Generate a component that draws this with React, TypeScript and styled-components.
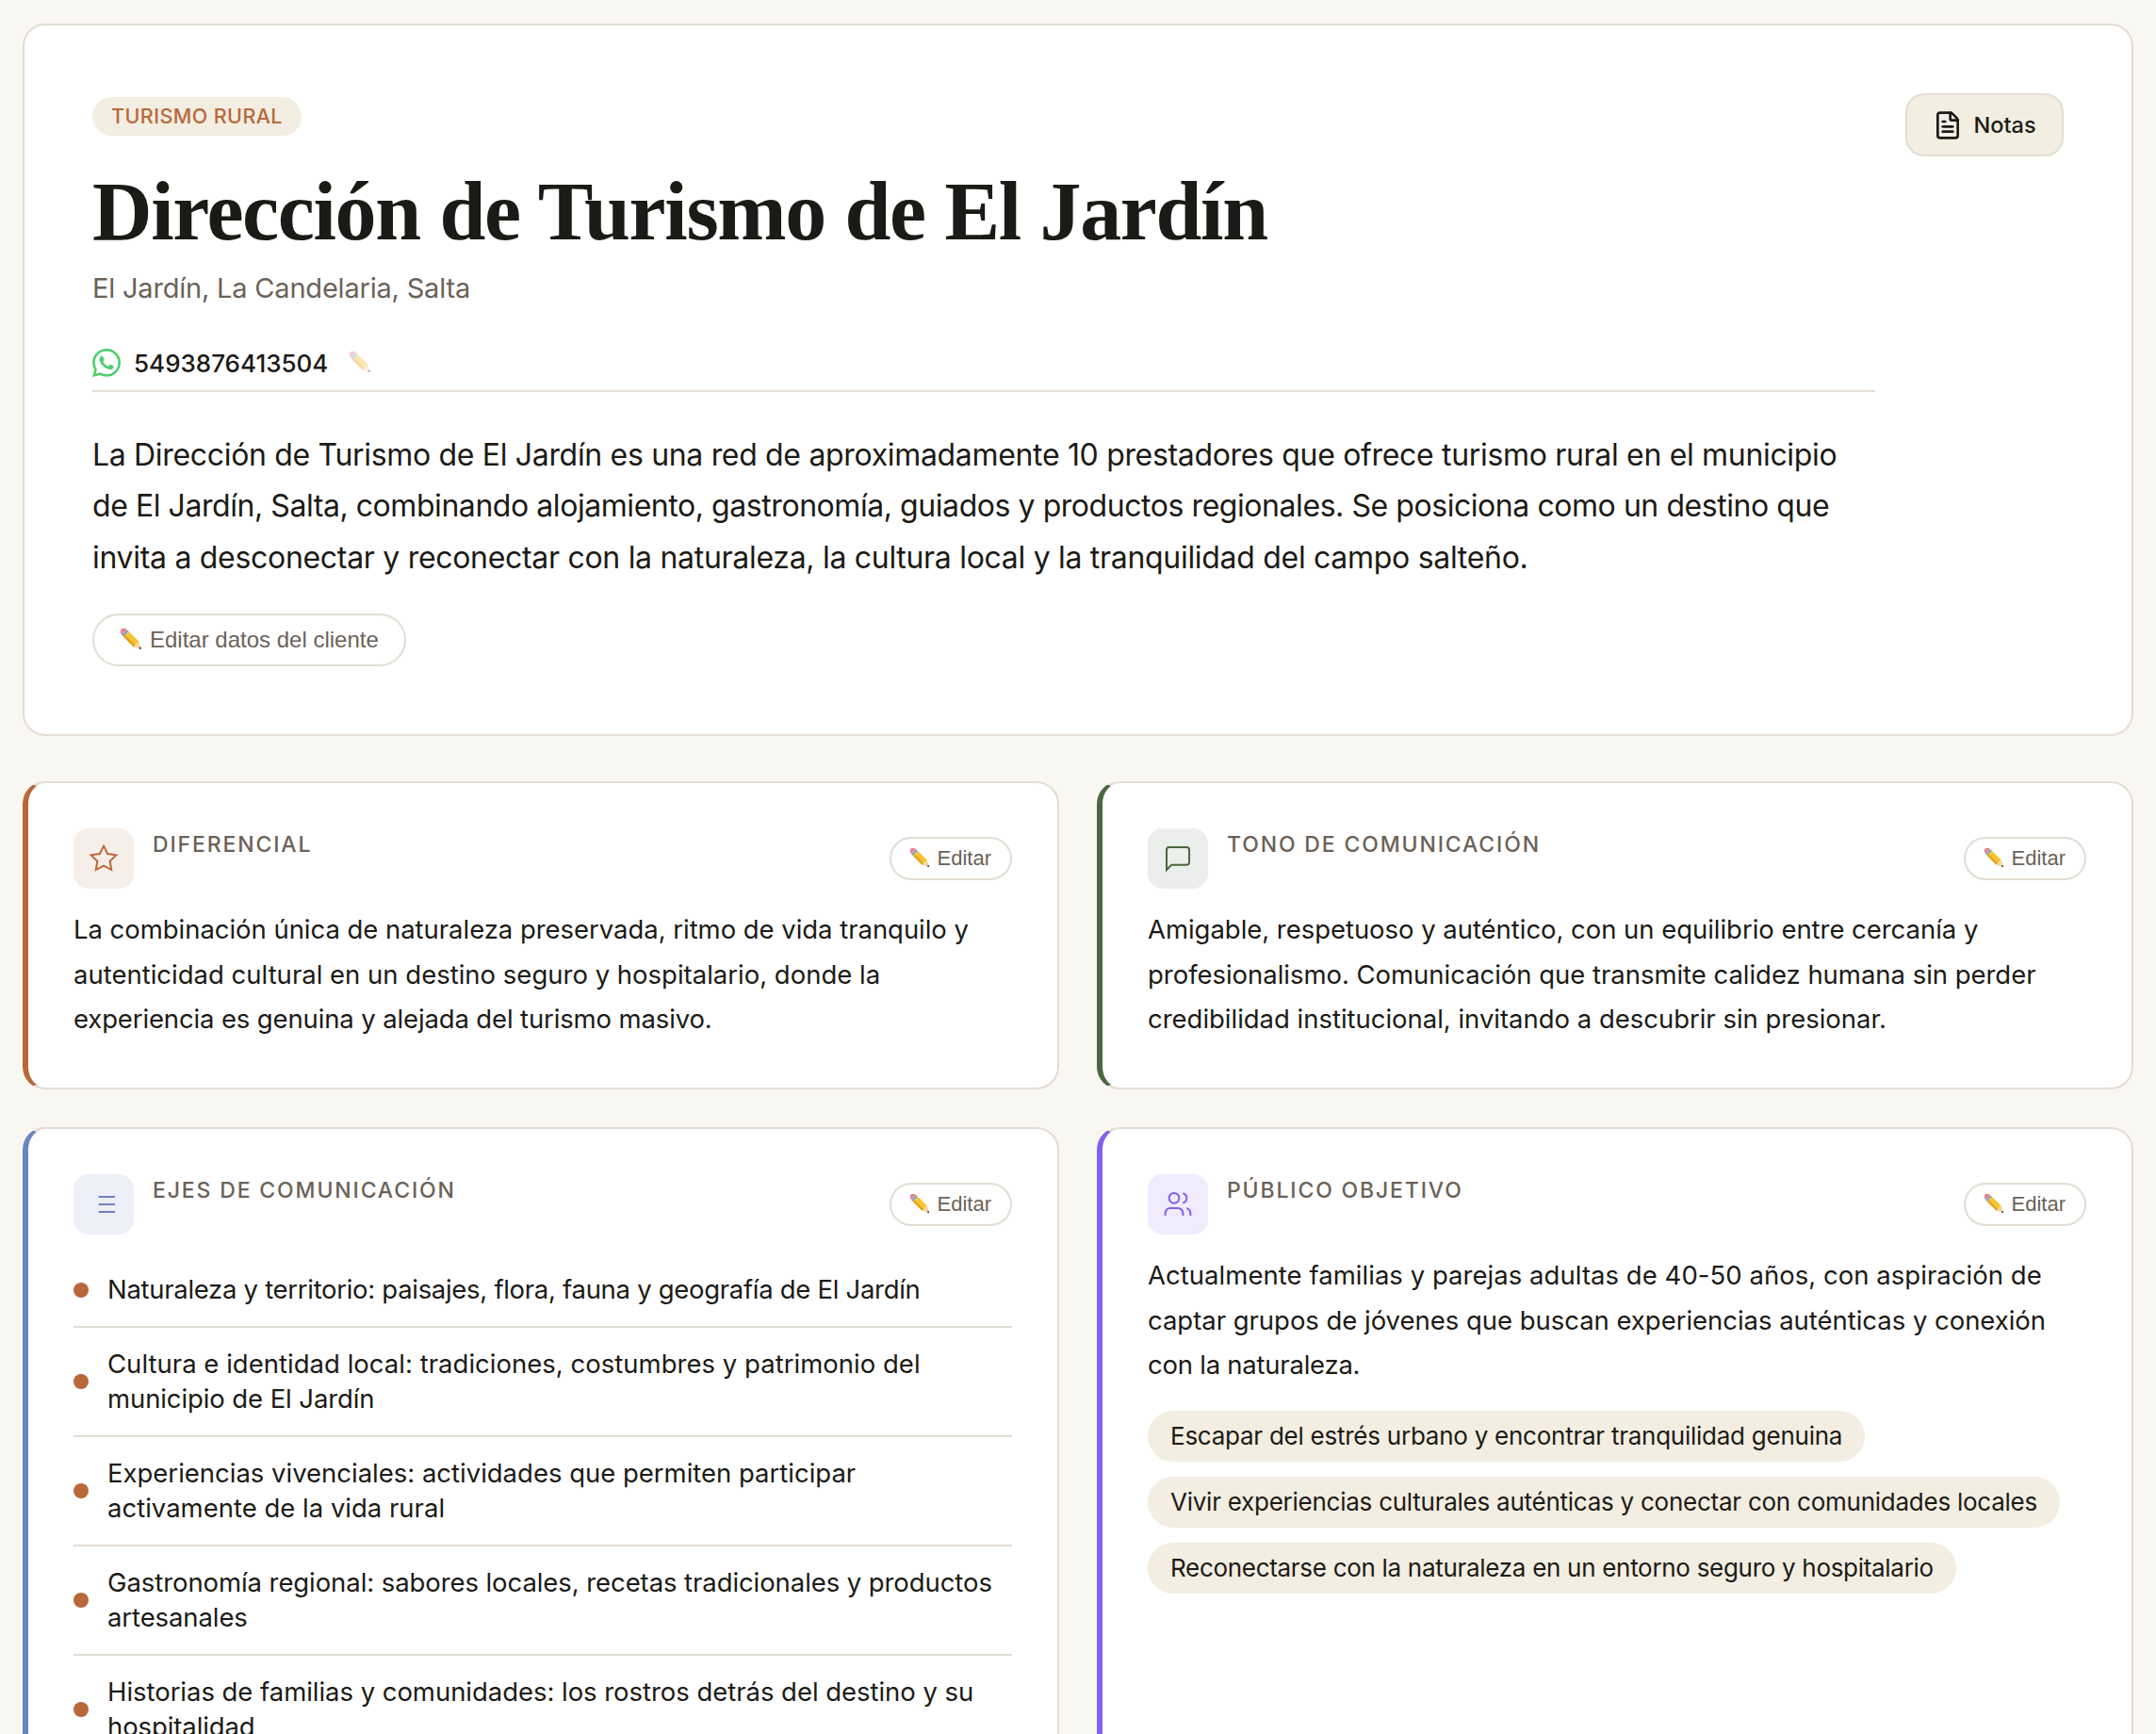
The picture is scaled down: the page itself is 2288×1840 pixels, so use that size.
import React from "react";
import styled, { createGlobalStyle } from "styled-components";
import { FileText } from "lucide-react";
import { SiWhatsapp } from "react-icons/si";

const SANS = `"Inter", "Noto Sans", sans-serif`;

const Global = createGlobalStyle`
  * { box-sizing: border-box; }
  html, body { margin: 0; height: 1840px; overflow: hidden; background: #f9f7f2; }
  body { font-family: ${SANS}; color: #1c1a16; }
`;

const Page = styled.main`
  display: flex;
  flex-direction: column;
  gap: 48px;
  padding: 25px 24px 0;
`;

const Hero = styled.section`
  display: flex;
  gap: 32px;
  align-items: flex-start;
  background: #fff;
  border: 2px solid #e3ddd3;
  border-radius: 24px;
  padding: 72px;
`;

const HeroMain = styled.div`
  flex: 1;
  min-width: 0;
`;

const Badge = styled.span`
  display: block;
  width: 222px;
  height: 41px;
  margin-top: 4px;
  border-radius: 21px;
  background: #f3ede2;
  color: #b8673b;
  font-size: 21.5px;
  font-weight: 500;
  line-height: 41px;
  text-align: center;
  letter-spacing: 0.4px;
`;

const Title = styled.h1`
  margin: 27px 0 0;
  font-family: "Liberation Serif", serif;
  font-size: 88px;
  font-weight: 700;
  line-height: 108px;
  letter-spacing: -1.36px;
  color: #1c1a16;
`;

const Location = styled.p`
  margin: 7px 0 0;
  font-size: 29px;
  line-height: 40px;
  letter-spacing: -0.2px;
  color: #6b6258;
`;

const ContactRow = styled.div`
  display: flex;
  align-items: center;
  height: 50px;
  margin-top: 34px;
  padding-bottom: 4px;
  border-bottom: 2px solid #e3ddd3;
  box-sizing: content-box;
  color: #1c1a16;
  font-size: 26px;
  font-weight: 500;
`;

const Phone = styled.span`
  margin-left: 14px;
  margin-right: 23px;
`;

const Description = styled.p`
  margin: 40px 0 0;
  font-size: 32px;
  line-height: 54.4px;
  color: #1c1a16;
`;

const Line = styled.span<{ $track: number }>`
  display: block;
  white-space: nowrap;
  letter-spacing: ${(p) => p.$track}px;
`;

const EditPill = styled.button<{ $small?: boolean }>`
  display: inline-flex;
  align-items: center;
  gap: 7px;
  border: 2px solid #e3ddd3;
  border-radius: 999px;
  background: #fff;
  color: #6b6258;
  font-family: "Liberation Sans", Arial, sans-serif;
  font-size: ${(p) => (p.$small ? 22 : 24)}px;
  line-height: ${(p) => (p.$small ? 26 : 28)}px;
  padding: ${(p) => (p.$small ? "8px 20px" : "12px 27px 12px 28px")};
  flex: none;
`;

const HeroEdit = styled(EditPill)`
  margin-top: 32px;
`;

const NotesButton = styled.button`
  flex: none;
  display: flex;
  align-items: center;
  justify-content: center;
  gap: 11px;
  width: 168px;
  height: 67px;
  padding: 0;
  background: #f3ede2;
  border: 2px solid #e3ddd3;
  border-radius: 20px;
  color: #1c1a16;
  font-family: ${SANS};
  font-size: 23.5px;
  font-weight: 500;
  svg { flex: none; }
`;

const Grid = styled.div`
  display: grid;
  grid-template-columns: 1fr 1fr;
  gap: 40px;
  align-items: stretch;
`;

const Card = styled.article<{ $accent: string }>`
  background: #fff;
  border: 2px solid #e3ddd3;
  border-left: 6px solid ${(p) => p.$accent};
  border-radius: 24px;
  padding: 48px;
`;

const CardHeader = styled.header`
  display: flex;
  align-items: center;
  gap: 20px;
  margin-bottom: 20px;
`;

const IconBox = styled.div<{ $bg: string; $fg: string }>`
  display: flex;
  align-items: center;
  justify-content: center;
  flex: none;
  width: 64px;
  height: 64px;
  border-radius: 16px;
  background: ${(p) => p.$bg};
  color: ${(p) => p.$fg};
`;

const Label = styled.h2`
  flex: 1;
  align-self: flex-start;
  margin: 0;
  font-size: 23px;
  font-weight: 500;
  line-height: 34px;
  letter-spacing: 1.85px;
  color: #6b6258;
`;

const Body = styled.p`
  margin: 0;
  font-size: 27.5px;
  line-height: 47.6px;
  color: #1c1a16;
`;

const List = styled.ul`
  list-style: none;
  margin: 0;
  padding: 0;
`;

const Item = styled.li`
  display: flex;
  align-items: center;
  gap: 20px;
  padding: 20px 0;
  border-bottom: 2px solid #e3ddd3;
  font-size: 27.5px;
  line-height: 37px;
  &:last-child { border-bottom: 0; }
`;

const Dot = styled.span`
  flex: none;
  width: 16px;
  height: 16px;
  border-radius: 50%;
  background: #b8673b;
`;

const Chips = styled.div`
  display: flex;
  flex-wrap: wrap;
  gap: 16px;
  margin-top: 24px;
`;

const Chip = styled.span<{ $track: number }>`
  display: block;
  height: 54px;
  padding: 0 24px;
  border-radius: 27px;
  background: #f3ede2;
  font-size: 26px;
  line-height: 54px;
  letter-spacing: ${(p) => p.$track}px;
  color: #1c1a16;
`;

const PencilSvg = styled.svg<{ $faded?: boolean }>`
  flex: none;
  opacity: ${(p) => (p.$faded ? 0.4 : 1)};
`;

const Pencil = ({ size = 24, faded }: { size?: number; faded?: boolean }) => (
  <PencilSvg $faded={faded} width={size} height={size} viewBox="0 0 24 24" aria-hidden="true">
    <g transform="rotate(45 12 12)">
      <rect x="-4" y="8" width="4.5" height="8" rx="1.6" fill="#e7838b" />
      <rect x="0.5" y="8" width="3" height="8" fill="#8fa3b8" />
      <rect x="3.5" y="8" width="15" height="8" fill="#f6c433" />
      <rect x="3.5" y="13.6" width="15" height="2.4" fill="#e3a020" />
      <polygon points="18.5,8 26,12 18.5,16" fill="#f2d6a6" />
      <polygon points="23.6,10.8 26.2,12 23.6,13.2" fill="#1c1a16" />
    </g>
  </PencilSvg>
);

const EditSmall = () => (
  <EditPill $small>
    <Pencil size={22} />
    Editar
  </EditPill>
);

const LineIcon = ({ children }: { children: React.ReactNode }) => (
  <svg width="32" height="32" viewBox="0 0 24 24" fill="none" stroke="currentColor" strokeWidth="1.5" aria-hidden="true">
    {children}
  </svg>
);

type Run = [string, number];

const Lines = ({ runs }: { runs: Run[] }) => (
  <>
    {runs.map(([text, track]) => (
      <Line key={text} $track={track}>{text}{" "}</Line>
    ))}
  </>
);

const DESCRIPTION: Run[] = [
  ["La Dirección de Turismo de El Jardín es una red de aproximadamente 10 prestadores que ofrece turismo rural en el municipio", -0.325],
  ["de El Jardín, Salta, combinando alojamiento, gastronomía, guiados y productos regionales. Se posiciona como un destino que", -0.44],
  ["invita a desconectar y reconectar con la naturaleza, la cultura local y la tranquilidad del campo salteño.", -0.3],
];

const DIFFERENTIAL: Run[] = [
  ["La combinación única de naturaleza preservada, ritmo de vida tranquilo y", -0.04],
  ["autenticidad cultural en un destino seguro y hospitalario, donde la", 0],
  ["experiencia es genuina y alejada del turismo masivo.", -0.135],
];

const TONE: Run[] = [
  ["Amigable, respetuoso y auténtico, con un equilibrio entre cercanía y", -0.04],
  ["profesionalismo. Comunicación que transmite calidez humana sin perder", -0.03],
  ["credibilidad institucional, invitando a descubrir sin presionar.", -0.02],
];

const AUDIENCE: Run[] = [
  ["Actualmente familias y parejas adultas de 40-50 años, con aspiración de", 0.04],
  ["captar grupos de jóvenes que buscan experiencias auténticas y conexión", -0.03],
  ["con la naturaleza.", -0.24],
];

const AXES: Run[][] = [
  [["Naturaleza y territorio: paisajes, flora, fauna y geografía de El Jardín", -0.3]],
  [["Cultura e identidad local: tradiciones, costumbres y patrimonio del", 0.02], ["municipio de El Jardín", -0.1]],
  [["Experiencias vivenciales: actividades que permiten participar", -0.01], ["activamente de la vida rural", 0]],
  [["Gastronomía regional: sabores locales, recetas tradicionales y productos", -0.08], ["artesanales", -0.1]],
  [["Historias de familias y comunidades: los rostros detrás del destino y su", -0.04], ["hospitalidad", -0.1]],
];

const GOALS: Run[] = [
  ["Escapar del estrés urbano y encontrar tranquilidad genuina", -0.25],
  ["Vivir experiencias culturales auténticas y conectar con comunidades locales", -0.25],
  ["Reconectarse con la naturaleza en un entorno seguro y hospitalario", -0.3],
];

export default function App() {
  return (
    <>
      <Global />
      <Page>
        <Hero>
          <HeroMain>
            <Badge>TURISMO RURAL</Badge>
            <Title>Dirección de Turismo de El Jardín</Title>
            <Location>El Jardín, La Candelaria, Salta</Location>
            <ContactRow>
              <SiWhatsapp size={30} color="#4ccf6a" />
              <Phone>5493876413504</Phone>
              <Pencil faded />
            </ContactRow>
            <Description><Lines runs={DESCRIPTION} /></Description>
            <HeroEdit>
              <Pencil />
              Editar datos del cliente
            </HeroEdit>
          </HeroMain>
          <NotesButton>
            <FileText size={32} strokeWidth={2} />
            Notas
          </NotesButton>
        </Hero>

        <Grid>
          <Card $accent="#b8673b">
            <CardHeader>
              <IconBox $bg="#f6eee8" $fg="#b8673b">
                <LineIcon>
                  <polygon points="12 2 15.09 8.26 22 9.27 17 14.14 18.18 21.02 12 17.77 5.82 21.02 7 14.14 2 9.27 8.91 8.26 12 2" />
                </LineIcon>
              </IconBox>
              <Label>DIFERENCIAL</Label>
              <EditSmall />
            </CardHeader>
            <Body><Lines runs={DIFFERENTIAL} /></Body>
          </Card>
          <Card $accent="#4a6741">
            <CardHeader>
              <IconBox $bg="#ebeeea" $fg="#4a6741">
                <LineIcon>
                  <path d="M21 15a2 2 0 0 1-2 2H7l-4 4V5a2 2 0 0 1 2-2h14a2 2 0 0 1 2 2z" />
                </LineIcon>
              </IconBox>
              <Label>TONO DE COMUNICACIÓN</Label>
              <EditSmall />
            </CardHeader>
            <Body><Lines runs={TONE} /></Body>
          </Card>
          <Card $accent="#6b83c0">
            <CardHeader>
              <IconBox $bg="#edf0f9" $fg="#6b83c0">
                <LineIcon>
                  <path d="M8 6h13M8 12h13M8 18h13" />
                </LineIcon>
              </IconBox>
              <Label>EJES DE COMUNICACIÓN</Label>
              <EditSmall />
            </CardHeader>
            <List>
              {AXES.map((runs) => (
                <Item key={runs[0][0]}><Dot /><div><Lines runs={runs} /></div></Item>
              ))}
            </List>
          </Card>
          <Card $accent="#8360ee">
            <CardHeader>
              <IconBox $bg="#f0ebfd" $fg="#8360ee">
                <LineIcon>
                  <path d="M16 21v-2a4 4 0 0 0-4-4H6a4 4 0 0 0-4 4v2" />
                  <circle cx="9" cy="7" r="4" />
                  <path d="M22 21v-2a4 4 0 0 0-3-3.87" />
                  <path d="M16 3.13a4 4 0 0 1 0 7.75" />
                </LineIcon>
              </IconBox>
              <Label>PÚBLICO OBJETIVO</Label>
              <EditSmall />
            </CardHeader>
            <Body><Lines runs={AUDIENCE} /></Body>
            <Chips>
              {GOALS.map(([g, t]) => <Chip key={g} $track={t}>{g}</Chip>)}
            </Chips>
          </Card>
        </Grid>
      </Page>
    </>
  );
}
